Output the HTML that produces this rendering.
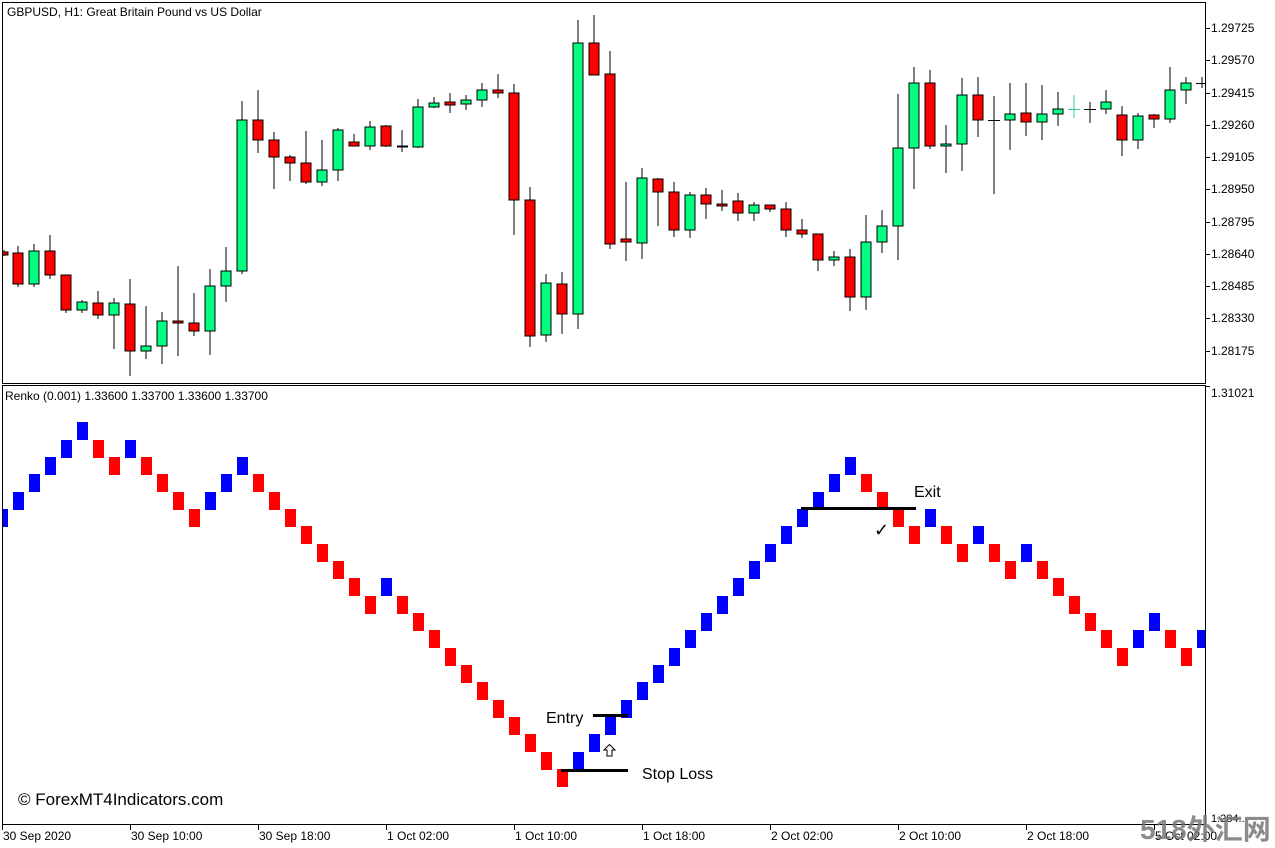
<!DOCTYPE html>
<html><head><meta charset="utf-8"><style>
html,body{margin:0;padding:0;background:#fff;width:1275px;height:848px;overflow:hidden}
svg{display:block}
text{font-family:"Liberation Sans",sans-serif;font-size:12px;fill:#000}
.a{font-size:16px}
</style></head><body>
<svg width="1275" height="848" viewBox="0 0 1275 848" shape-rendering="crispEdges">
<defs><clipPath id="p1"><rect x="3" y="3" width="1202" height="380"/></clipPath>
<clipPath id="p2"><rect x="3" y="386" width="1202" height="438"/></clipPath></defs>
<rect x="0" y="0" width="1275" height="848" fill="#fff"/>
<rect x="2.5" y="2.5" width="1203" height="381" fill="none" stroke="#000"/>
<rect x="2.5" y="385.5" width="1203" height="439" fill="none" stroke="#000"/>
<text x="7" y="16">GBPUSD, H1:  Great Britain Pound vs US Dollar</text>
<text x="5" y="400">Renko (0.001) 1.33600 1.33700 1.33600 1.33700</text>
<g stroke="#000">
<line x1="1205" y1="28.5" x2="1210" y2="28.5"/><line x1="1205" y1="60.5" x2="1210" y2="60.5"/><line x1="1205" y1="93.5" x2="1210" y2="93.5"/><line x1="1205" y1="125.5" x2="1210" y2="125.5"/><line x1="1205" y1="157.5" x2="1210" y2="157.5"/><line x1="1205" y1="189.5" x2="1210" y2="189.5"/><line x1="1205" y1="222.5" x2="1210" y2="222.5"/><line x1="1205" y1="254.5" x2="1210" y2="254.5"/><line x1="1205" y1="286.5" x2="1210" y2="286.5"/><line x1="1205" y1="318.5" x2="1210" y2="318.5"/><line x1="1205" y1="351.5" x2="1210" y2="351.5"/><line x1="1205" y1="386.5" x2="1210" y2="386.5"/>
</g>
<text x="1211" y="32">1.29725</text><text x="1211" y="64">1.29570</text><text x="1211" y="97">1.29415</text><text x="1211" y="129">1.29260</text><text x="1211" y="161">1.29105</text><text x="1211" y="193">1.28950</text><text x="1211" y="226">1.28795</text><text x="1211" y="258">1.28640</text><text x="1211" y="290">1.28485</text><text x="1211" y="322">1.28330</text><text x="1211" y="355">1.28175</text><text x="1211" y="397">1.31021</text>
<g clip-path="url(#p1)" stroke="#000">
<line x1="4" y1="250" x2="4" y2="256"/><rect x="-1" y="252" width="9" height="3" fill="#f00"/>
<line x1="18" y1="246" x2="18" y2="287"/><rect x="13" y="253" width="10" height="31" fill="#f00"/>
<line x1="34" y1="244" x2="34" y2="287"/><rect x="29" y="251" width="10" height="33" fill="#00ff80"/>
<line x1="50" y1="235" x2="50" y2="279"/><rect x="45" y="251" width="10" height="24" fill="#f00"/>
<line x1="66" y1="275" x2="66" y2="313"/><rect x="61" y="275" width="10" height="35" fill="#f00"/>
<line x1="82" y1="300" x2="82" y2="313"/><rect x="77" y="302" width="10" height="8" fill="#00ff80"/>
<line x1="98" y1="291" x2="98" y2="319"/><rect x="93" y="303" width="10" height="12" fill="#f00"/>
<line x1="114" y1="298" x2="114" y2="349"/><rect x="109" y="303" width="10" height="12" fill="#00ff80"/>
<line x1="130" y1="279" x2="130" y2="376"/><rect x="125" y="304" width="10" height="47" fill="#f00"/>
<line x1="146" y1="306" x2="146" y2="359"/><rect x="141" y="346" width="10" height="5" fill="#00ff80"/>
<line x1="162" y1="312" x2="162" y2="364"/><rect x="157" y="321" width="10" height="25" fill="#00ff80"/>
<line x1="178" y1="266" x2="178" y2="356"/><rect x="173" y="321" width="10" height="2" fill="#f00"/>
<line x1="194" y1="293" x2="194" y2="336"/><rect x="189" y="323" width="10" height="8" fill="#f00"/>
<line x1="210" y1="269" x2="210" y2="355"/><rect x="205" y="286" width="10" height="45" fill="#00ff80"/>
<line x1="226" y1="247" x2="226" y2="302"/><rect x="221" y="271" width="10" height="15" fill="#00ff80"/>
<line x1="242" y1="101" x2="242" y2="274"/><rect x="237" y="120" width="10" height="151" fill="#00ff80"/>
<line x1="258" y1="90" x2="258" y2="153"/><rect x="253" y="120" width="10" height="20" fill="#f00"/>
<line x1="274" y1="132" x2="274" y2="189"/><rect x="269" y="140" width="10" height="17" fill="#f00"/>
<line x1="290" y1="155" x2="290" y2="181"/><rect x="285" y="157" width="10" height="6" fill="#f00"/>
<line x1="306" y1="131" x2="306" y2="184"/><rect x="301" y="163" width="10" height="19" fill="#f00"/>
<line x1="322" y1="140" x2="322" y2="186"/><rect x="317" y="170" width="10" height="12" fill="#00ff80"/>
<line x1="338" y1="128" x2="338" y2="181"/><rect x="333" y="130" width="10" height="40" fill="#00ff80"/>
<line x1="354" y1="134" x2="354" y2="146"/><rect x="349" y="142" width="10" height="4" fill="#f00"/>
<line x1="370" y1="121" x2="370" y2="150"/><rect x="365" y="127" width="10" height="19" fill="#00ff80"/>
<line x1="386" y1="125" x2="386" y2="147"/><rect x="381" y="126" width="10" height="20" fill="#f00"/>
<line x1="402" y1="130" x2="402" y2="152"/><line x1="397" y1="146.5" x2="408" y2="146.5" stroke-width="2"/>
<line x1="418" y1="99" x2="418" y2="148"/><rect x="413" y="107" width="10" height="40" fill="#00ff80"/>
<line x1="434" y1="97" x2="434" y2="108"/><rect x="429" y="103" width="10" height="4" fill="#00ff80"/>
<line x1="450" y1="93" x2="450" y2="113"/><rect x="445" y="102" width="10" height="3" fill="#f00"/>
<line x1="466" y1="95" x2="466" y2="110"/><rect x="461" y="100" width="10" height="4" fill="#00ff80"/>
<line x1="482" y1="83" x2="482" y2="107"/><rect x="477" y="90" width="10" height="10" fill="#00ff80"/>
<line x1="498" y1="74" x2="498" y2="98"/><rect x="493" y="90" width="10" height="3" fill="#f00"/>
<line x1="514" y1="84" x2="514" y2="235"/><rect x="509" y="93" width="10" height="107" fill="#f00"/>
<line x1="530" y1="187" x2="530" y2="347"/><rect x="525" y="200" width="10" height="136" fill="#f00"/>
<line x1="546" y1="274" x2="546" y2="342"/><rect x="541" y="283" width="10" height="52" fill="#00ff80"/>
<line x1="562" y1="272" x2="562" y2="334"/><rect x="557" y="284" width="10" height="30" fill="#f00"/>
<line x1="578" y1="20" x2="578" y2="329"/><rect x="573" y="43" width="10" height="271" fill="#00ff80"/>
<line x1="594" y1="15" x2="594" y2="75"/><rect x="589" y="43" width="10" height="32" fill="#f00"/>
<line x1="610" y1="51" x2="610" y2="249"/><rect x="605" y="74" width="10" height="170" fill="#f00"/>
<line x1="626" y1="182" x2="626" y2="261"/><rect x="621" y="239" width="10" height="3" fill="#f00"/>
<line x1="642" y1="168" x2="642" y2="259"/><rect x="637" y="178" width="10" height="65" fill="#00ff80"/>
<line x1="658" y1="178" x2="658" y2="226"/><rect x="653" y="179" width="10" height="13" fill="#f00"/>
<line x1="674" y1="182" x2="674" y2="237"/><rect x="669" y="192" width="10" height="38" fill="#f00"/>
<line x1="690" y1="192" x2="690" y2="238"/><rect x="685" y="195" width="10" height="35" fill="#00ff80"/>
<line x1="706" y1="188" x2="706" y2="219"/><rect x="701" y="195" width="10" height="9" fill="#f00"/>
<line x1="722" y1="190" x2="722" y2="211"/><rect x="717" y="204" width="10" height="2" fill="#f00"/>
<line x1="738" y1="193" x2="738" y2="221"/><rect x="733" y="201" width="10" height="12" fill="#f00"/>
<line x1="754" y1="202" x2="754" y2="221"/><rect x="749" y="205" width="10" height="8" fill="#00ff80"/>
<line x1="770" y1="205" x2="770" y2="212"/><rect x="765" y="205" width="10" height="4" fill="#f00"/>
<line x1="786" y1="202" x2="786" y2="237"/><rect x="781" y="209" width="10" height="21" fill="#f00"/>
<line x1="802" y1="219" x2="802" y2="238"/><rect x="797" y="230" width="10" height="4" fill="#f00"/>
<line x1="818" y1="234" x2="818" y2="271"/><rect x="813" y="234" width="10" height="26" fill="#f00"/>
<line x1="834" y1="251" x2="834" y2="266"/><rect x="829" y="257" width="10" height="3" fill="#00ff80"/>
<line x1="850" y1="249" x2="850" y2="311"/><rect x="845" y="257" width="10" height="40" fill="#f00"/>
<line x1="866" y1="215" x2="866" y2="310"/><rect x="861" y="242" width="10" height="55" fill="#00ff80"/>
<line x1="882" y1="210" x2="882" y2="253"/><rect x="877" y="226" width="10" height="16" fill="#00ff80"/>
<line x1="898" y1="94" x2="898" y2="260"/><rect x="893" y="148" width="10" height="78" fill="#00ff80"/>
<line x1="914" y1="67" x2="914" y2="189"/><rect x="909" y="83" width="10" height="65" fill="#00ff80"/>
<line x1="930" y1="70" x2="930" y2="149"/><rect x="925" y="83" width="10" height="63" fill="#f00"/>
<line x1="946" y1="125" x2="946" y2="173"/><rect x="941" y="144" width="10" height="2" fill="#00ff80"/>
<line x1="962" y1="78" x2="962" y2="171"/><rect x="957" y="95" width="10" height="49" fill="#00ff80"/>
<line x1="978" y1="77" x2="978" y2="137"/><rect x="973" y="95" width="10" height="25" fill="#f00"/>
<line x1="994" y1="96" x2="994" y2="194"/><line x1="988" y1="120.5" x2="1000" y2="120.5"/>
<line x1="1010" y1="83" x2="1010" y2="150"/><rect x="1005" y="114" width="10" height="6" fill="#00ff80"/>
<line x1="1026" y1="83" x2="1026" y2="136"/><rect x="1021" y="113" width="10" height="9" fill="#f00"/>
<line x1="1042" y1="85" x2="1042" y2="140"/><rect x="1037" y="114" width="10" height="8" fill="#00ff80"/>
<line x1="1058" y1="92" x2="1058" y2="126"/><rect x="1053" y="109" width="10" height="5" fill="#00ff80"/>
<line x1="1074" y1="95" x2="1074" y2="118" stroke="#3c9"/><line x1="1068" y1="109.5" x2="1080" y2="109.5" stroke="#3c9"/>
<line x1="1090" y1="102" x2="1090" y2="123"/><line x1="1084" y1="109.5" x2="1096" y2="109.5"/>
<line x1="1106" y1="90" x2="1106" y2="114"/><rect x="1101" y="102" width="10" height="7" fill="#00ff80"/>
<line x1="1122" y1="106" x2="1122" y2="156"/><rect x="1117" y="115" width="10" height="25" fill="#f00"/>
<line x1="1138" y1="113" x2="1138" y2="149"/><rect x="1133" y="116" width="10" height="24" fill="#00ff80"/>
<line x1="1154" y1="114" x2="1154" y2="128"/><rect x="1149" y="115" width="10" height="4" fill="#f00"/>
<line x1="1170" y1="67" x2="1170" y2="123"/><rect x="1165" y="90" width="10" height="29" fill="#00ff80"/>
<line x1="1186" y1="77" x2="1186" y2="104"/><rect x="1181" y="83" width="10" height="7" fill="#00ff80"/>
<line x1="1202" y1="77" x2="1202" y2="88"/><line x1="1196" y1="83.5" x2="1208" y2="83.5"/>
</g>
<g clip-path="url(#p2)">
<g fill="#00f">
<rect x="-3" y="509" width="11" height="18"/><rect x="13" y="492" width="11" height="18"/><rect x="29" y="474" width="11" height="18"/><rect x="45" y="457" width="11" height="18"/><rect x="61" y="440" width="11" height="18"/><rect x="77" y="422" width="11" height="18"/><rect x="125" y="440" width="11" height="18"/><rect x="205" y="492" width="11" height="18"/><rect x="221" y="474" width="11" height="18"/><rect x="237" y="457" width="11" height="18"/><rect x="381" y="578" width="11" height="18"/>
<rect x="573" y="752" width="11" height="18"/><rect x="589" y="734" width="11" height="18"/><rect x="605" y="717" width="11" height="18"/><rect x="621" y="700" width="11" height="18"/><rect x="637" y="682" width="11" height="18"/><rect x="653" y="665" width="11" height="18"/><rect x="669" y="648" width="11" height="18"/><rect x="685" y="630" width="11" height="18"/><rect x="701" y="613" width="11" height="18"/><rect x="717" y="596" width="11" height="18"/><rect x="733" y="578" width="11" height="18"/><rect x="749" y="561" width="11" height="18"/><rect x="765" y="544" width="11" height="18"/><rect x="781" y="526" width="11" height="18"/><rect x="797" y="509" width="11" height="18"/><rect x="813" y="492" width="11" height="18"/><rect x="829" y="474" width="11" height="18"/><rect x="845" y="457" width="11" height="18"/>
<rect x="925" y="509" width="11" height="18"/><rect x="973" y="526" width="11" height="18"/><rect x="1021" y="544" width="11" height="18"/><rect x="1133" y="630" width="11" height="18"/><rect x="1149" y="613" width="11" height="18"/><rect x="1197" y="630" width="11" height="18"/>
</g>
<g fill="#f00">
<rect x="93" y="440" width="11" height="18"/><rect x="109" y="457" width="11" height="18"/><rect x="141" y="457" width="11" height="18"/><rect x="157" y="474" width="11" height="18"/><rect x="173" y="492" width="11" height="18"/><rect x="189" y="509" width="11" height="18"/><rect x="253" y="474" width="11" height="18"/><rect x="269" y="492" width="11" height="18"/><rect x="285" y="509" width="11" height="18"/><rect x="301" y="526" width="11" height="18"/><rect x="317" y="544" width="11" height="18"/><rect x="333" y="561" width="11" height="18"/><rect x="349" y="578" width="11" height="18"/><rect x="365" y="596" width="11" height="18"/>
<rect x="397" y="596" width="11" height="18"/><rect x="413" y="613" width="11" height="18"/><rect x="429" y="630" width="11" height="18"/><rect x="445" y="648" width="11" height="18"/><rect x="461" y="665" width="11" height="18"/><rect x="477" y="682" width="11" height="18"/><rect x="493" y="700" width="11" height="18"/><rect x="509" y="717" width="11" height="18"/><rect x="525" y="734" width="11" height="18"/><rect x="541" y="752" width="11" height="18"/><rect x="557" y="769" width="11" height="18"/>
<rect x="861" y="474" width="11" height="18"/><rect x="877" y="492" width="11" height="18"/><rect x="893" y="509" width="11" height="18"/><rect x="909" y="526" width="11" height="18"/><rect x="941" y="526" width="11" height="18"/><rect x="957" y="544" width="11" height="18"/><rect x="989" y="544" width="11" height="18"/><rect x="1005" y="561" width="11" height="18"/><rect x="1037" y="561" width="11" height="18"/><rect x="1053" y="578" width="11" height="18"/><rect x="1069" y="596" width="11" height="18"/><rect x="1085" y="613" width="11" height="18"/><rect x="1101" y="630" width="11" height="18"/><rect x="1117" y="648" width="11" height="18"/><rect x="1165" y="630" width="11" height="18"/><rect x="1181" y="648" width="11" height="18"/>
</g>
</g>
<g fill="#000">
<rect x="593" y="714" width="35" height="3"/>
<rect x="561" y="769" width="67" height="3"/>
<rect x="801" y="507" width="115" height="3"/>
</g>
<text class="a" x="546" y="723">Entry</text>
<text class="a" x="642" y="779">Stop Loss</text>
<text class="a" x="914" y="497">Exit</text>
<text x="874" y="536" style="font-size:18px;font-family:'DejaVu Sans',sans-serif">✓</text>
<path d="M609.5 744.5 L604 750 H607 V756 H612 V750 H615 Z" fill="#fff" stroke="#000" stroke-width="1" shape-rendering="auto"/>
<text x="18" y="805" style="font-size:17px">© ForexMT4Indicators.com</text>
<g stroke="#000">
<line x1="2.5" y1="825" x2="2.5" y2="830"/><line x1="130.5" y1="825" x2="130.5" y2="830"/><line x1="258.5" y1="825" x2="258.5" y2="830"/><line x1="386.5" y1="825" x2="386.5" y2="830"/><line x1="514.5" y1="825" x2="514.5" y2="830"/><line x1="642.5" y1="825" x2="642.5" y2="830"/><line x1="770.5" y1="825" x2="770.5" y2="830"/><line x1="898.5" y1="825" x2="898.5" y2="830"/><line x1="1026.5" y1="825" x2="1026.5" y2="830"/><line x1="1154.5" y1="825" x2="1154.5" y2="830"/>
</g>
<text x="3" y="840">30 Sep 2020</text><text x="131" y="840">30 Sep 10:00</text><text x="259" y="840">30 Sep 18:00</text><text x="387" y="840">1 Oct 02:00</text><text x="515" y="840">1 Oct 10:00</text><text x="643" y="840">1 Oct 18:00</text><text x="771" y="840">2 Oct 02:00</text><text x="899" y="840">2 Oct 10:00</text><text x="1027" y="840">2 Oct 18:00</text><text x="1155" y="840">5 Oct 02:00</text>
<text x="1211" y="822" style="font-size:11px">1.284..</text>
<text x="1140" y="839" style="font-size:28px;font-weight:bold;fill:#777;opacity:.85;font-family:'Liberation Sans','Noto Sans CJK SC',sans-serif">518外汇网</text>
</svg>
</body></html>
